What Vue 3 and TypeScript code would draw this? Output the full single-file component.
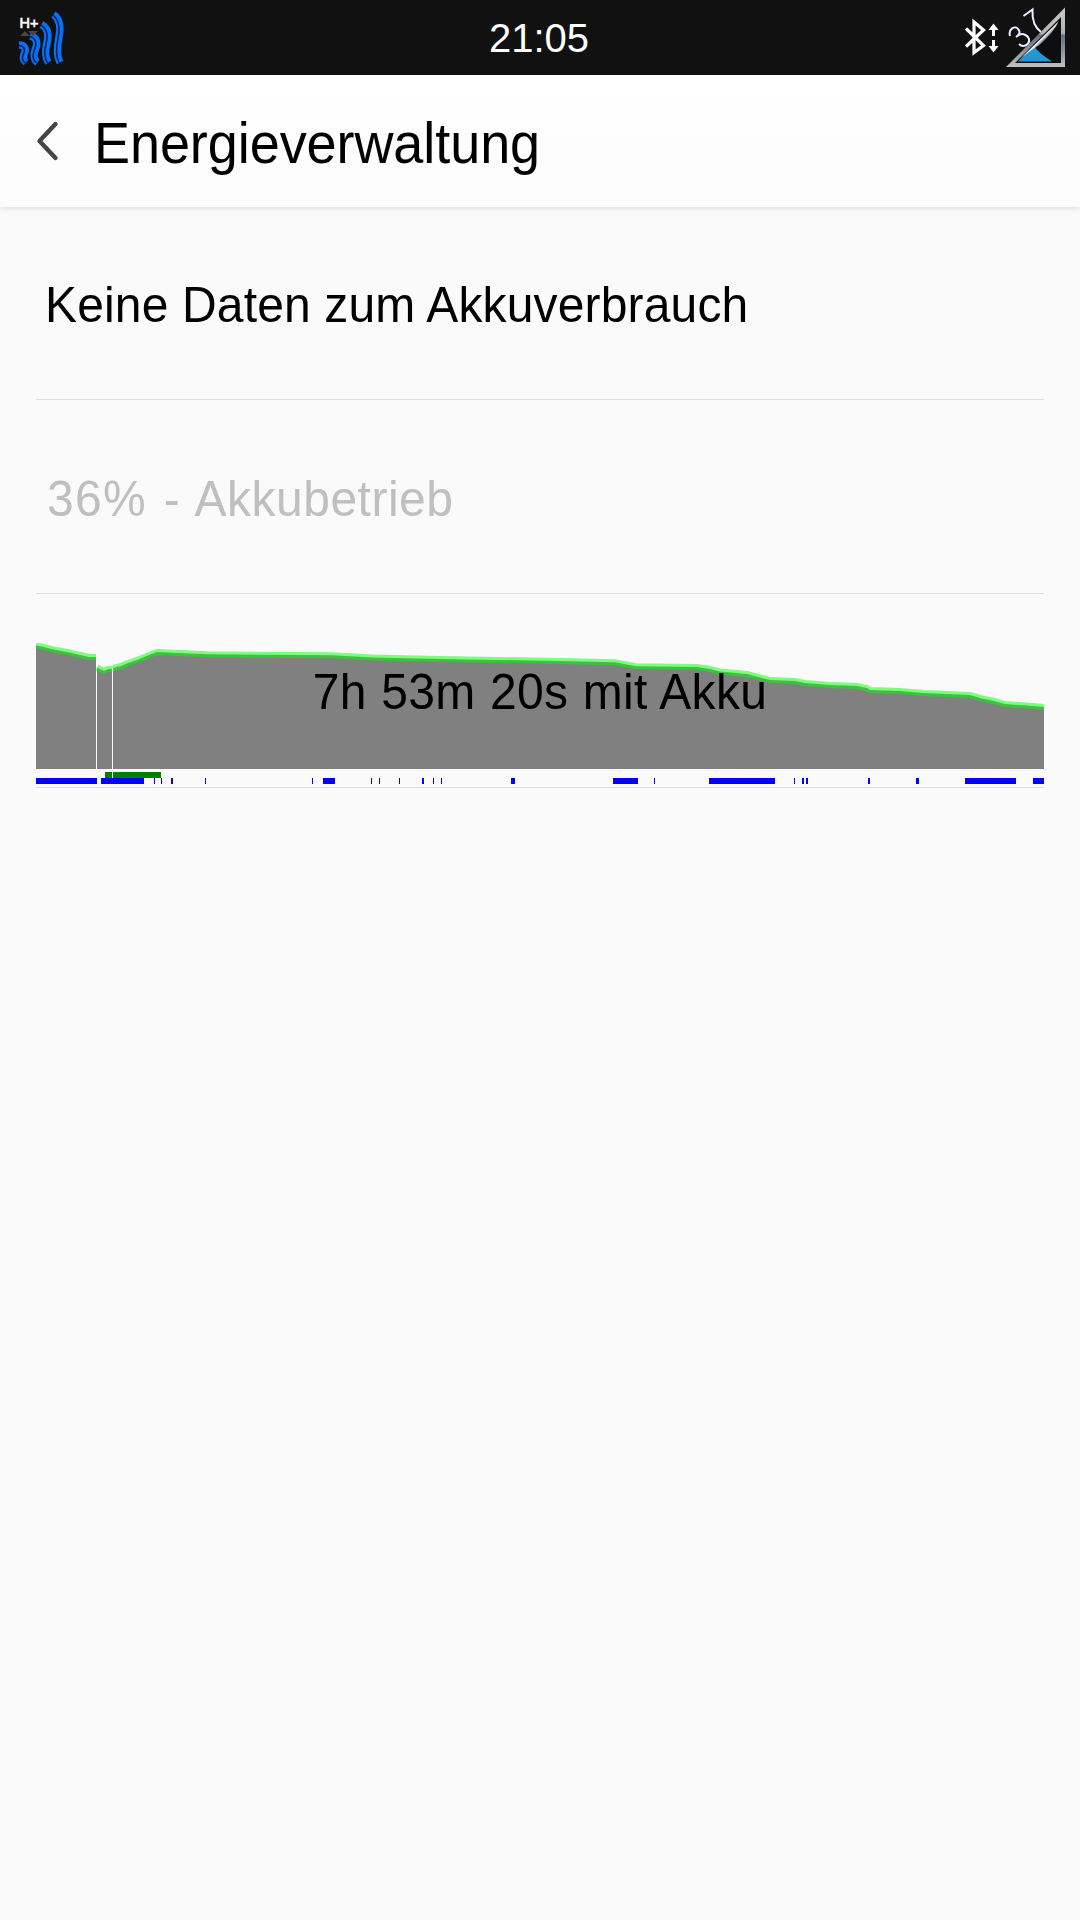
<script setup lang="ts">
type Span = [start: number, end: number]

const firstRun = '36,645.3 55,649.7 67,652 89,657 96,657'
const secondRun =
  '97,667.5 104,671 108,669 112,669 116,667 121,666 128,663 137,660 147,655.7 157,652 207,654.3 332,655.3 373,657.5 427,658.7 520,660.3 570,661.3 615,662.3 636,666.3 697,667 710,669 720,671.5 747,674 770,680 795,681 805,683 830,685 857,686 867,688 870,690 900,691 923,693 970,695 982,698.5 992,700.5 1005,704 1027,705.5 1044,707'

const awake: Span[] = [
  [36, 97], [101, 144], [154, 155], [161, 162], [171, 173], [205, 206],
  [312, 313], [323, 335], [371, 372], [379, 380], [399, 400], [422, 424],
  [433, 434], [441, 442], [511, 515], [613, 638], [654, 655], [709, 775],
  [794, 795], [802, 804], [806, 808], [868, 870], [916, 919], [965, 1016],
  [1033, 1044],
]
const charging: Span[] = [[105, 112], [113, 161]]

const signalBars = [
  'M19 45 C25 45 26.5 49 24.5 53 C22.5 57 23 60 26 62.5',
  'M30 36 C37 37 38 43 35.5 49 C33 55 34 60 37.5 62.5',
  'M41.5 24.5 C48 28 49 35 47 43 C45 51 45 58 48.5 62.5',
  'M53.5 14.5 C60 19 61 27 59 37 C57 47 57 57 60 62.5',
]
</script>

<template>
  <div class="screen">
    <header class="status">
      <svg class="signal" width="80" height="75" viewBox="0 0 80 75">
        <g fill="none">
          <path v-for="d in signalBars" :key="d" :d="d" stroke="#0870f4" stroke-width="7.4" />
          <path v-for="d in signalBars" :key="'s' + d" :d="d" stroke="#061e50" stroke-width="1.5" transform="translate(-.9 .5)" />
        </g>
        <path d="M20 36 L25 31 L30 36Z M28 31 H38 L33 36Z" fill="#484848" />
        <text x="19.5" y="27.5" class="net">H+</text>
      </svg>
      <span class="clock">21:05</span>
      <svg class="tray" width="140" height="75" viewBox="0 0 140 75">
        <defs>
          <linearGradient id="rim" x1="0" y1="0" x2="0" y2="1">
            <stop offset="0" stop-color="#c8c8c8" />
            <stop offset=".43" stop-color="#b0b3b5" />
            <stop offset=".47" stop-color="#65747d" />
            <stop offset=".75" stop-color="#8f979b" />
            <stop offset="1" stop-color="#c2c2c2" />
          </linearGradient>
          <linearGradient id="shine" gradientUnits="userSpaceOnUse" x1="98" y1="42" x2="102" y2="46">
            <stop offset="0" stop-color="#fff" />
            <stop offset="1" stop-color="#fff" stop-opacity="0" />
          </linearGradient>
        </defs>
        <path d="M26 28.5 L43.5 45.5 L34 52.5 V22 L43.5 30 L26 46.5" fill="none" stroke="#fff" stroke-width="3.2" />
        <path d="M53.5 23.5 L58.5 30 H55 V36 H52 V30 H48.5Z M52 40 H55 V46 H58.5 L53.5 52.5 L48.5 46 H52Z" fill="#fff" />
        <g fill="none" stroke="#ecebff" stroke-width="2">
          <path d="M70 36 C68 29 75 25 78 29 C81 32 79 35 76 37 C81 32 87 34 89 39 C90 45 83 48 79 44" />
          <path d="M83.5 16 L92.5 9.5 C92 19 94 27 101 32" />
        </g>
        <path d="M66 67 L125 7.5 V67Z" fill="url(#rim)" />
        <path d="M75 63 L121 17 V63Z" fill="#0d0e10" />
        <path d="M78 61.5 L94 45.5 Q97 52 112 61.5Z" fill="#2397d6" />
        <path d="M81 58 L118.5 21.5 Q114 32 100 44.5 Q91 50 81 58Z" fill="url(#shine)" />
      </svg>
    </header>

    <nav class="bar">
      <svg class="back" width="30" height="44" viewBox="0 0 30 44">
        <path d="M20.5 5 L4.5 22 L20.5 39" fill="none" stroke="#454547" stroke-width="4.4" stroke-linecap="round" stroke-linejoin="round" />
      </svg>
      <h1>Energieverwaltung</h1>
    </nav>

    <main>
      <section class="row"><span class="label usage">Keine Daten zum Akkuverbrauch</span></section>
      <section class="row"><span class="label level"><span class="percent">36%</span> - Akkubetrieb</span></section>
      <section class="row history">
        <svg width="1008" height="193" viewBox="36 594 1008 193">
          <g fill="#808080">
            <polygon :points="`${firstRun} 96,769 36,769`" />
            <polygon :points="`${secondRun} 1044,769 97,769`" />
          </g>
          <g fill="none" stroke="#00ff00" stroke-opacity=".5" stroke-width="6">
            <polyline :points="firstRun" />
            <polyline :points="secondRun" />
          </g>
          <rect x="112" y="668" width="1" height="110" fill="#fafafa" />
          <rect v-for="[a, b] in charging" :key="'c' + a" :x="a" y="772" :width="b - a" height="6" fill="#008000" />
          <rect v-for="[a, b] in awake" :key="a" :x="a" y="778" :width="b - a" height="6" fill="#0000ff" />
        </svg>
        <span class="label duration">7h 53m 20s mit Akku</span>
      </section>
    </main>
  </div>
</template>

<style>
body { margin: 0; background: #fafafa; }
</style>

<style scoped>
.screen {
  width: 1080px;
  height: 1920px;
  overflow: hidden;
  background: #fafafa;
  color: #000;
  font-family: "Liberation Sans", Arial, sans-serif;
}
.status {
  display: grid;
  grid-template-columns: 140px 1fr 140px;
  height: 75px;
  background: #111;
}
.net { font: 14.5px "Liberation Sans", Arial, sans-serif; fill: #fff; stroke: #fff; stroke-width: .6px; }
.clock {
  padding-right: 2px;
  color: #fff;
  font-size: 40px;
  line-height: 77px;
  text-align: center;
  transform: scaleY(1.03);
}
.bar {
  display: flex;
  align-items: center;
  position: relative;
  height: 132px;
  box-sizing: border-box;
  padding-left: 35px;
  background: linear-gradient(#fff, #fcfcfc);
  box-shadow: 0 1px 5px rgba(0, 0, 0, .14);
}
h1 {
  margin: 4px 0 0 29px;
  font-size: 54px;
  font-weight: 400;
  line-height: 60px;
  letter-spacing: -.07px;
  transform: scaleY(1.05);
}
main { padding: 0 36px; margin-top: -1px; }
.row {
  display: flex;
  align-items: center;
  height: 193px;
  border-bottom: 1px solid #e0e0e0;
}
.label {
  display: block;
  padding-top: 4px;
  font-size: 48px;
  line-height: 56px;
  white-space: nowrap;
  transform: scaleY(1.05);
}
.usage { padding-left: 9px; letter-spacing: .15px; }
.level { padding-left: 11px; color: #bfbfbf; letter-spacing: .5px; word-spacing: 3px; }
.percent { letter-spacing: 1.3px; }
.history { position: relative; }
.duration {
  position: absolute;
  left: 0;
  right: 0;
  top: 66px;
  text-align: center;
  letter-spacing: .3px;
  word-spacing: .8px;
}
</style>
